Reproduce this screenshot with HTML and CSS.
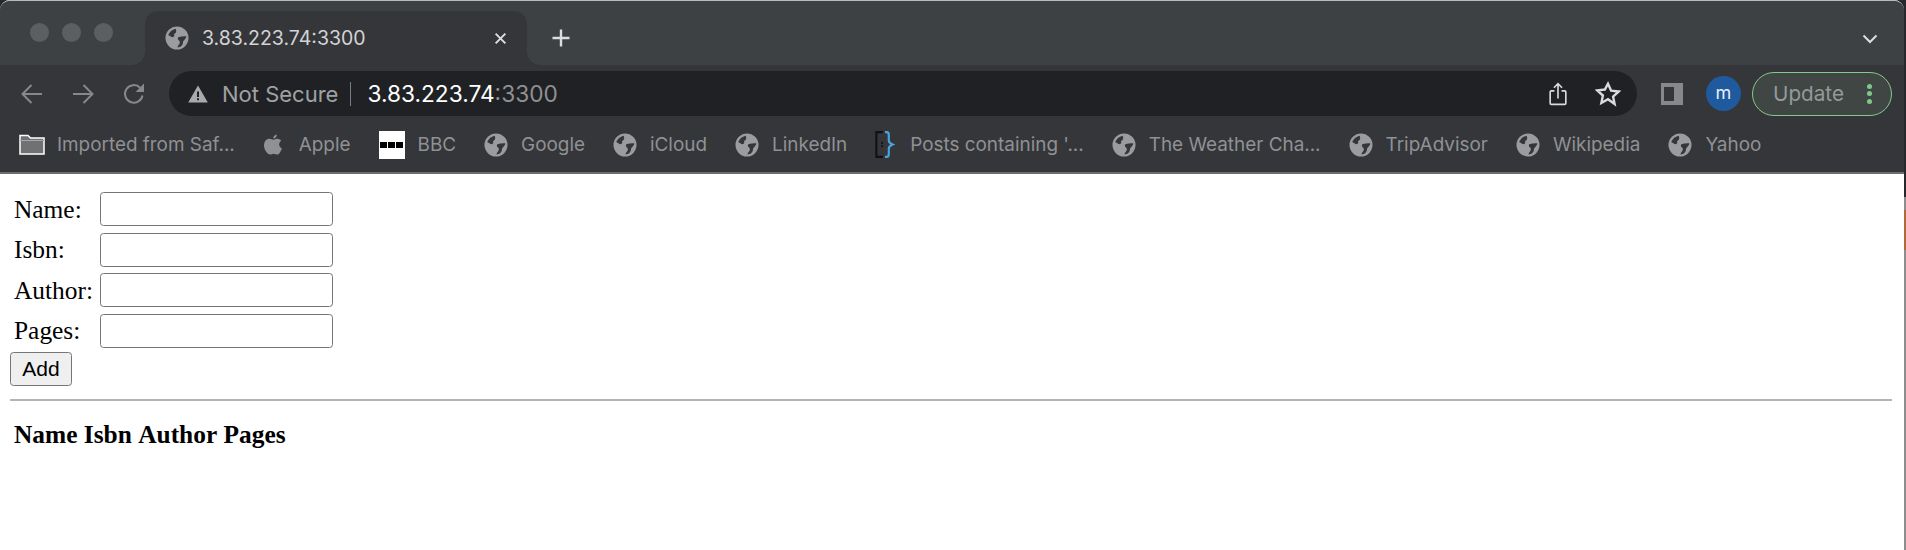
FILE: index.html
```html
<!DOCTYPE html>
<html lang="en">
<head>
<meta charset="utf-8">
<title>3.83.223.74:3300</title>
<link rel="stylesheet" href="styles.css">
</head>
<body>
<svg class="defs" width="0" height="0" aria-hidden="true">
  <symbol id="globe" viewBox="0 0 24 24">
    <path fill-rule="evenodd" d="M12 .5a11.500 11.500 0 1 1 0 23a11.500 11.500 0 0 1 0-23zM10.500 2.700C7 3.500 4.500 6 3.200 9L7 11.200C9 11.200 9.800 9.500 9 8C11 7.500 12 5 10.500 2.700zM21.500 10.500C19 10 16.500 10.500 14 11C12.500 11.500 12.500 13 13.500 14C15 15 15.500 17 14 18.500C13 19.500 12.500 20.500 12.500 21.500L15.500 20.800C17 19.500 18 18 18 16C18 15 20 14 21.500 10.500z"/>
  </symbol>
</svg>
<div class="shell">
<header class="chrome">
  <div class="tabstrip">
    <div class="lights"><i></i><i></i><i></i></div>
    <div class="tab">
      <svg class="ico tab-globe"><use href="#globe"/></svg>
      <span class="tab-title">3.83.223.74:3300</span>
      <svg class="tab-close" viewBox="0 0 12 12"><path d="M1.500 1.500l9 9M10.500 1.500l-9 9"/></svg>
    </div>
    <svg class="newtab" viewBox="0 0 20 20"><path d="M10 1.500v17M1.500 10h17"/></svg>
    <svg class="chev" viewBox="0 0 16 10"><path d="M1.500 1.500L8 8l6.500-6.500"/></svg>
  </div>
  <div class="toolbar">
    <svg class="nav" viewBox="0 0 24 24"><path d="M22 12H3M11.500 3L2.500 12l9 9"/></svg>
    <svg class="nav" viewBox="0 0 24 24"><path d="M2 12h19M12.500 3l9 9l-9 9"/></svg>
    <svg class="nav reload" viewBox="0 0 24 24"><path d="M20.500 13.500a8.800 8.800 0 1 1-2.400-7.800"/><path class="solid" d="M22 1.500v8.500h-8.500z"/></svg>
    <div class="omnibox">
      <svg class="warn" viewBox="0 0 20 18"><path fill-rule="evenodd" d="M10 .5L19.800 17.500H.2zM9 6.500v5.500h2V6.500zM9 13.200v2h2v-2z"/></svg>
      <span class="secure">Not Secure</span>
      <span class="sep"></span>
      <span class="host">3.83.223.74</span><span class="port">:3300</span>
      <span class="spacer"></span>
      <svg class="share" viewBox="0 0 20 26"><path d="M6 9.500H2.500a1.200 1.200 0 0 0-1.200 1.200v12.600c0 .7.500 1.200 1.200 1.200h15c.7 0 1.200-.5 1.200-1.200V10.700c0-.7-.5-1.200-1.200-1.200H14M10 18V1.500M5.500 6L10 1.500L14.500 6"/></svg>
      <svg class="star" viewBox="0 0 24 24"><path d="M12 2.500l2.900 6.400l7 .8l-5.200 4.700l1.400 6.900L12 16.800l-6.100 3.500l1.400-6.900l-5.200-4.700l7-.8z"/></svg>
    </div>
    <span class="panel"><i></i></span>
    <span class="avatar">m</span>
    <div class="update">
      <span>Update</span>
      <span class="dots"><i></i><i></i><i></i></span>
    </div>
  </div>
  <nav class="bookmarks">
    <a class="bm first"><svg class="folder" viewBox="0 0 26 21"><path d="M1 20V1.500h8l2.500 2.500H25V20z"/><path class="line" d="M1 6.500h24"/></svg>Imported from Saf...</a>
    <a class="bm"><svg class="apple" viewBox="0 0 17 20"><path d="M12.200 0c.1 1.700-1.300 3.800-3.500 3.800C8.500 2 10.200.2 12.200 0zM8.800 5c.8 0 1.900-1 3.600-1c.9 0 2.800.3 3.900 2c-2.900 1.800-2.500 5.900.6 7.200c-.7 2-2.400 5.800-4.400 5.800c-1.200 0-1.700-.8-3.300-.8s-2.100.8-3.300.8C3.200 19 0 14.500 0 10.500S2.500 4.100 5 4.100c1.600 0 2.900.9 3.800.9z"/></svg>Apple</a>
    <a class="bm"><span class="bbc"><i></i><i></i><i></i></span>BBC</a>
    <a class="bm"><svg class="ico"><use href="#globe"/></svg>Google</a>
    <a class="bm"><svg class="ico"><use href="#globe"/></svg>iCloud</a>
    <a class="bm"><svg class="ico"><use href="#globe"/></svg>LinkedIn</a>
    <a class="bm"><svg class="brace" viewBox="0 0 18 25"><path class="bk" d="M7 1H1v23h6M5.500 11h1.500M5.500 14h1.500"/><path class="bl" d="M9 1h1.500c1.500 0 2 1 2 2.500v5c0 2 1 3 3.500 4c-2.500 1-3.500 2-3.500 4v5c0 1.500-.5 2.500-2 2.500H9"/></svg>Posts containing '...</a>
    <a class="bm"><svg class="ico"><use href="#globe"/></svg>The Weather Cha...</a>
    <a class="bm"><svg class="ico"><use href="#globe"/></svg>TripAdvisor</a>
    <a class="bm"><svg class="ico"><use href="#globe"/></svg>Wikipedia</a>
    <a class="bm"><svg class="ico"><use href="#globe"/></svg>Yahoo</a>
  </nav>
</header>
<main class="page">
  <form class="book-form">
    <label class="row"><span class="lbl">Name:</span><input class="field" type="text"></label>
    <label class="row"><span class="lbl">Isbn:</span><input class="field" type="text"></label>
    <label class="row"><span class="lbl">Author:</span><input class="field" type="text"></label>
    <label class="row"><span class="lbl">Pages:</span><input class="field" type="text"></label>
    <button class="add" type="button">Add</button>
  </form>
  <hr class="rule">
  <div class="heads"><b>Name</b> <b>Isbn</b> <b>Author</b> <b>Pages</b></div>
</main>
</div>
</body>
</html>
```

FILE: styles.css
```css
* { box-sizing: border-box; }
html, body { margin: 0; height: 100%; overflow: hidden; }
body { background: linear-gradient(#26282b 0, #26282b 197px, #8d8d8d 197px, #8d8d8d 210px, #b0693a 210px, #b0693a 250px, #8d8d8d 250px); }
.defs { position: absolute; }
.shell { width: 1904px; height: 100%; background: #fff; border-radius: 10px 10px 0 0; }
.chrome { height: 174px; background: #35363a; border-top: 1px solid #b9babb; border-bottom: 2px solid #6d6e70; border-radius: 10px 10px 0 0; overflow: hidden; font-family: Inter, "Liberation Sans", sans-serif; }

.tabstrip { height: 64px; background: #3e4144; display: flex; align-items: flex-start; }
.lights { display: flex; gap: 13px; padding: 22px 0 0 30px; width: 145px; flex: none; }
.lights i { width: 19px; height: 19px; border-radius: 50%; background: #5c5e61; }
.tab { position: relative; width: 382px; height: 54px; margin-top: 10px; background: #35363a; border-radius: 13px 13px 0 0; display: flex; align-items: center; padding: 0 20px; flex: none; }
.tab::before, .tab::after { content: ""; position: absolute; bottom: 0; width: 13px; height: 13px; }
.tab::before { left: -13px; background: radial-gradient(circle at 0 0, transparent 12.500px, #35363a 13px); }
.tab::after { right: -13px; background: radial-gradient(circle at 100% 0, transparent 12.500px, #35363a 13px); }
.tab-title { margin-left: 13px; font-size: 19.500px; color: #d3d4d5; flex: 1; }
.tab-close { width: 13px; height: 13px; fill: none; stroke: #dcdddd; stroke-width: 1.800; }
.newtab { width: 20px; height: 20px; margin: 27px 0 0 24px; fill: none; stroke: #dcdddd; stroke-width: 2.400; flex: none; }
.chev { width: 16px; height: 10px; margin: 33px 26px 0 auto; fill: none; stroke: #dcdddd; stroke-width: 2; flex: none; }

.toolbar { height: 52px; display: flex; align-items: center; padding: 5px 0 0 20px; }
.nav { width: 24px; height: 24px; margin-right: 27px; fill: none; stroke: #86888a; stroke-width: 2; flex: none; }
.nav.reload { margin-right: 23px; }
.reload .solid { fill: #86888a; stroke: none; }
.omnibox { height: 45px; width: 1468px; background: #202124; border-radius: 23px; display: flex; align-items: center; padding: 0 16px 0 19px; flex: none; font-size: 22px; }
.warn { width: 20px; height: 18px; fill: #a9aaab; flex: none; }
.secure { color: #a0a1a3; margin-left: 14px; }
.sep { width: 1px; height: 24px; background: #7b7c7e; margin: 0 16px 0 12px; }
.host { color: #fff; font-size: 22.700px; }
.port { color: #8f9092; font-size: 22.700px; }
.spacer { flex: 1; }
.share { width: 18px; height: 24px; fill: none; stroke: #d9dadb; stroke-width: 1.800; }
.star { width: 26px; height: 26px; margin-left: 28px; fill: none; stroke: #d9dadb; stroke-width: 2.200; }
.panel { width: 22px; height: 22px; margin-left: 24px; background: #87888a; padding: 4px 9px 4px 3px; flex: none; }
.panel i { display: block; width: 100%; height: 100%; background: #35363a; }
.avatar { width: 35px; height: 35px; margin-left: 23px; border-radius: 50%; background: #1f5a9e; color: #e8eef5; font-size: 18px; display: flex; align-items: center; justify-content: center; padding-bottom: 3px; flex: none; }
.update { width: 140px; height: 44px; margin-left: 11px; border: 1.500px solid #84c98d; border-radius: 22px; background: #3f4643; display: flex; align-items: center; justify-content: space-between; padding: 0 19px 0 20px; color: #96999a; font-size: 20.700px; flex: none; }
.dots { display: flex; flex-direction: column; gap: 2.500px; }
.dots i { width: 5px; height: 5px; border-radius: 50%; background: #80c78b; }

.bookmarks { height: 55px; display: flex; align-items: center; padding-left: 19px; }
.bm { display: flex; align-items: center; margin-right: 28px; color: #8f9194; font-size: 18.900px; white-space: nowrap; flex: none; }
.bm.first { margin-right: 29px; }
.ico { width: 24px; height: 24px; fill: #9a9c9e; margin-right: 13px; flex: none; }
.tab-globe { margin-right: 0; }
.folder { width: 26px; height: 21px; margin-right: 12px; fill: #707173; stroke: #fff; stroke-width: 1.500; }
.folder .line { fill: none; stroke: #a5a6a7; stroke-width: 1; }
.apple { width: 18px; height: 22px; margin-right: 17px; fill: #8f9193; }
.bbc { width: 26px; height: 28px; margin-right: 13px; background: #fff; display: flex; align-items: center; justify-content: center; gap: 1px; }
.bbc i { width: 7px; height: 6px; background: #000; }
.brace { width: 20px; height: 27px; margin-right: 15px; fill: none; }
.brace .bk { stroke: #111; stroke-width: 2; }
.brace .bl { stroke: #46a6de; stroke-width: 2; }

.page { padding: 15px 12px 0 10px; font-family: "Liberation Serif", serif; font-size: 25.400px; color: #000; }
.book-form { display: flex; flex-direction: column; align-items: flex-start; }
.row { display: flex; align-items: center; height: 40.500px; padding-left: 4px; }
.lbl { width: 86px; flex: none; }
.field { width: 233px; height: 34px; border: 1.500px solid #767676; border-radius: 3.500px; background: #fff; padding: 0; }
.add { width: 62px; height: 34px; margin-top: 1px; font-family: "Liberation Sans", sans-serif; font-size: 21px; color: #000; background: #efefef; border: 1.500px solid #767676; border-radius: 3.500px; padding: 0; }
.rule { margin: 13px 0 0; border: 0; border-top: 2px solid #b4b4b4; }
.heads { padding: 18px 4px 0; font-weight: bold; line-height: 30px; }
```
